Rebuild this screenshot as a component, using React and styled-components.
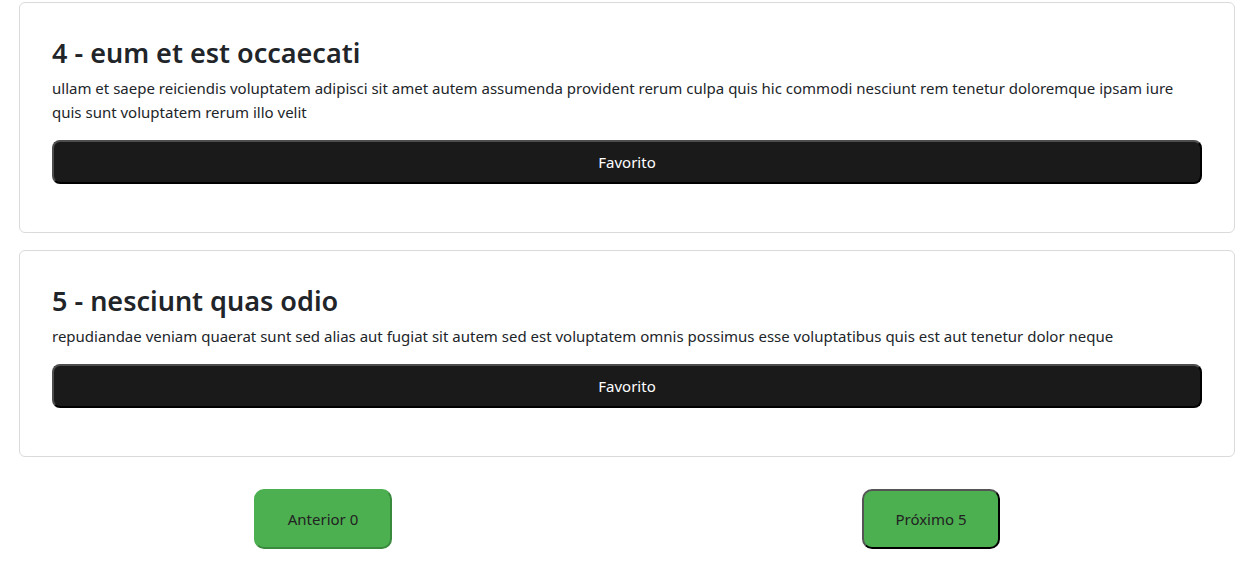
import React from 'react';
import styled, { createGlobalStyle } from 'styled-components';

const GlobalStyle = createGlobalStyle`
  body {
    margin: 0;
    background: #fff;
    color: #212529;
    font-family: 'Segoe UI', 'Noto Sans', 'Liberation Sans', sans-serif;
    font-size: 16px;
    line-height: 1.5;
  }
`;

const Page = styled.div`
  padding: 2px 17px 20px 19px;
`;

const List = styled.div`
  display: flex;
  flex-direction: column;
  gap: 17px;
`;

const Card = styled.div`
  border: 1px solid #dadada;
  border-radius: 6px;
  padding: 32px;
  background: #fff;
`;

const Title = styled.h3`
  margin: 0 0 5px;
  font-size: 27px;
  font-weight: 600;
  line-height: 36px;
  color: #212529;
`;

const Body = styled.p`
  margin: 0 0 16px;
  font-size: 15px;
  line-height: 24px;
`;

const FavButton = styled.button`
  display: block;
  width: 100%;
  height: 44px;
  margin-bottom: 16px;
  background: #1a1a1a;
  color: #fff;
  font-family: inherit;
  font-size: 15px;
  border: 2px solid;
  border-color: #4d4d4d #000 #000 #4d4d4d;
  border-radius: 8px;
  cursor: pointer;
`;

const Pager = styled.div`
  display: flex;
  justify-content: space-around;
  margin-top: 32px;
`;

const PageButton = styled.button`
  width: 138px;
  height: 60px;
  background: #4caf50;
  color: #222;
  font-family: inherit;
  font-size: 15px;
  border: 2px solid;
  border-color: ${({ $active }) =>
    $active ? '#555 #000 #000 #555' : '#4caf50 #3a8a3d #3a8a3d #4caf50'};
  border-radius: 10px;
  cursor: pointer;
`;

const posts = [
  {
    id: 4,
    title: 'eum et est occaecati',
    body: 'ullam et saepe reiciendis voluptatem adipisci sit amet autem assumenda provident rerum culpa quis hic commodi nesciunt rem tenetur doloremque ipsam iure quis sunt voluptatem rerum illo velit',
  },
  {
    id: 5,
    title: 'nesciunt quas odio',
    body: 'repudiandae veniam quaerat sunt sed alias aut fugiat sit autem sed est voluptatem omnis possimus esse voluptatibus quis est aut tenetur dolor neque',
  },
];

const App = () => (
  <Page>
    <GlobalStyle />
    <List>
      {posts.map(post => (
        <Card key={post.id}>
          <Title>{post.id} - {post.title}</Title>
          <Body>{post.body}</Body>
          <FavButton>Favorito</FavButton>
        </Card>
      ))}
    </List>
    <Pager>
      <PageButton>Anterior 0</PageButton>
      <PageButton $active>Próximo 5</PageButton>
    </Pager>
  </Page>
);

export default App;
